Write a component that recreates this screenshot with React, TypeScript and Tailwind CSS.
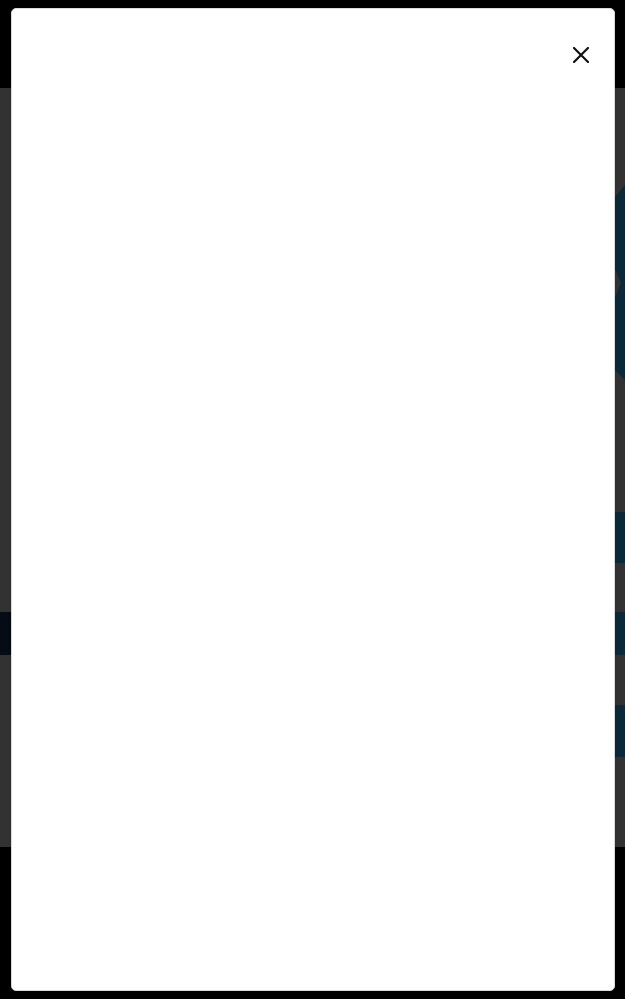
import React from "react";

export default function App() {
  return (
    <div className="relative w-[625px] h-[999px] overflow-hidden bg-black font-['Liberation_Sans',sans-serif]">
      <header className="h-[88px] bg-black" />
      <main className="h-[759px] bg-[#323232] flex flex-col pt-[97px]">
        <div className="h-[195px] flex justify-end">
          <svg width="60" height="195" viewBox="0 0 60 195" className="shrink-0 -mr-[50px]">
            <polygon points="10,0 60,0 60,195 10,195 0,185 0,112 6,98 0,84 0,12" fill="#0b2a39" />
          </svg>
        </div>
        <div className="h-[132px]" />
        <div className="h-[51px] flex justify-end">
          <div className="w-[200px] bg-[#0b2a39]" />
        </div>
        <div className="h-[49px]" />
        <div className="h-[43px] flex bg-[#060c15]">
          <div className="flex-1" />
          <div className="w-[200px] bg-[#0b2a39]" />
        </div>
        <div className="h-[50px]" />
        <div className="h-[52px] flex justify-end">
          <div className="w-[200px] bg-[#0b2a39]" />
        </div>
      </main>
      <footer className="h-[152px] bg-black" />

      <div className="absolute left-[11px] top-[8px] w-[604px] h-[983px] bg-white rounded-[5px] border border-[#d9d9d9] shadow-sm">
        <button className="absolute right-[16px] top-[29px] w-[34px] h-[34px] flex items-center justify-center" aria-label="Close">
          <svg width="16" height="16" viewBox="0 0 16 16">
            <path d="M1 1 L15 15 M15 1 L1 15" stroke="#111" strokeWidth="2.2" strokeLinecap="square" />
          </svg>
        </button>
      </div>
    </div>
  );
}
